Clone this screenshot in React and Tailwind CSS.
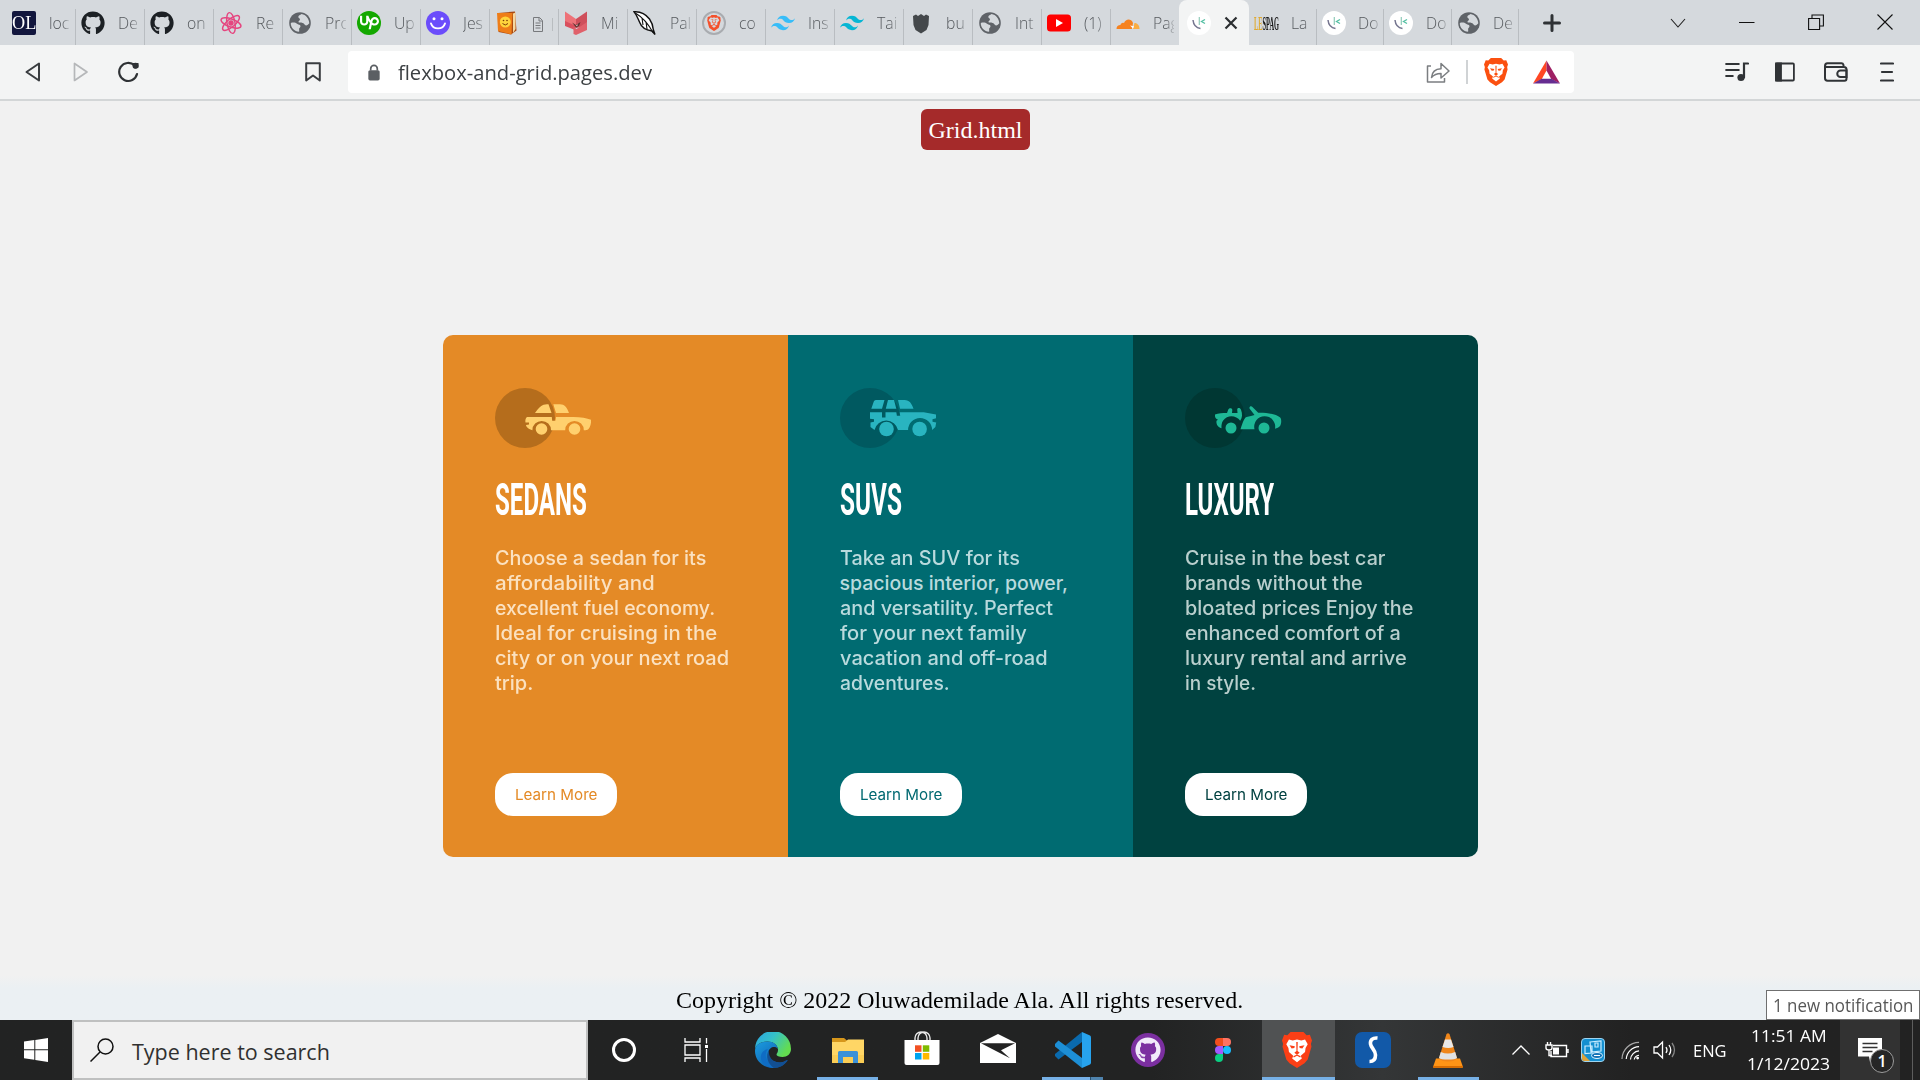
import { useLayoutEffect, useRef, useState } from "react";
import { FaGithub } from "react-icons/fa";
import { SiBrave, SiCloudflare, SiTailwindcss, SiUpwork } from "react-icons/si";

/* One line of text stretched or condensed to an exact width. */
function Fit({ w, children, className = "" }) {
  const ref = useRef(null);
  const [scale, setScale] = useState(1);
  useLayoutEffect(() => {
    if (ref.current) setScale(w / ref.current.offsetWidth);
  }, [w]);
  return (
    <span className={`block whitespace-nowrap ${className}`} style={{ width: w }}>
      <span ref={ref} className="inline-block origin-left whitespace-nowrap" style={{ transform: `scaleX(${scale})` }}>
        {children}
      </span>
    </span>
  );
}

/* ---------- tab icons ---------- */
const Globe = () => (
  <svg viewBox="0 0 24 24" className="size-6">
    <circle cx="12" cy="12" r="10.8" fill="#5f6368" />
    <path d="M2.800 12c2.500-.8 5-.3 6.200.8 1 1 3.200.6 3.500 2.200.1 1.500-1.500 1.800-1.400 3.200.1.900.2 1.600 0 2.600C6.400 20.500 2.600 16.500 2.800 12zM13.500 3c-1.200 1.200-3.300 1.300-3.200 3 .1 1.300 1.800 1.100 1.700 2.500-.1 1.300-1.700 1.400-1.500 2.600.3 1.300 2.800.6 4.300 1 1.600.5 1.600 2.200 3.200 2.300 1.200.1 2.400-.9 3.300-2.200C21 7.500 18 3.800 13.500 3z" fill="#d5d9dd" />
  </svg>
);
const ReactPink = () => (
  <svg viewBox="0 0 24 24" className="size-6" fill="none" stroke="#e5457f" strokeWidth="1.400">
    <ellipse cx="12" cy="12" rx="10.500" ry="4" transform="rotate(20 12 12)" />
    <ellipse cx="12" cy="12" rx="10.500" ry="4" transform="rotate(80 12 12)" />
    <ellipse cx="12" cy="12" rx="10.500" ry="4" transform="rotate(140 12 12)" />
    <circle cx="12" cy="12" r="2" fill="#e5457f" />
  </svg>
);
const Smile = () => (
  <svg viewBox="0 0 24 24" className="size-6">
    <circle cx="12" cy="12" r="12" fill="#6b4dfb" />
    <circle cx="8" cy="7.800" r="1.500" fill="#fff" />
    <circle cx="16" cy="7.800" r="1.500" fill="#fff" />
    <path d="M5 12.500c2 6.500 12 6.500 14 0" fill="none" stroke="#fff" strokeWidth="1.900" strokeLinecap="round" />
  </svg>
);
const Book = () => (
  <svg viewBox="0 0 24 24" className="size-6">
    <path d="M3 2l17-1.500 1.500 19L16 23.500 3.500 21z" fill="#a94a14" />
    <path d="M2 2h15.500l-1 21.500L3 20z" fill="#ee7d18" />
    <path d="M18 2.500l2.500-1V18L18 22z" fill="#f6d9a0" />
    <circle cx="10.300" cy="11" r="5.500" fill="#ffd43c" />
    <circle cx="8.500" cy="9.500" r=".8" fill="#7c3d08" />
    <circle cx="12" cy="9.500" r=".8" fill="#7c3d08" />
    <path d="M7.500 12.500q2.800 3 5.500 0" fill="none" stroke="#7c3d08" />
  </svg>
);
const Fox = () => (
  <svg viewBox="0 0 24 24" className="size-6">
    <path d="M1 .500l11 7.500v9L1 13z" fill="#ee7278" />
    <path d="M23 .500L12 8v9l11-2z" fill="#cf4f5b" />
    <path d="M1 10l11 5-1 4-10-4z" fill="#d9505e" />
    <path d="M9.500 16l3 2L23 11v8l-11 5-2.500-1z" fill="#e0616b" />
    <path d="M8 11.500l4 2.500 4.500-3-1.500 4-3 1.500z" fill="#5f3434" />
    <path d="M10.500 13.500l1.500 1 2-1.200-1 2z" fill="#f5e9dd" />
  </svg>
);
const Feather = () => (
  <svg viewBox="0 0 24 24" className="size-6">
    <path d="M1 .800c6-.5 11.500 2 15.500 7.200 2.500 3.500 3.500 7 3.800 10.500l1.700 5-3-3.500C13 19 8.500 16.500 7 12 5 8 4 4 1 .800z" fill="#fff" stroke="#111" strokeWidth="1.400" />
    <path d="M3 2.500c7 4 12 10 17 19M9 7l1 7M13 11l1 7" fill="none" stroke="#111" strokeWidth="1.100" />
  </svg>
);
const BraveRing = () => (
  <span className="flex size-6 items-center justify-center rounded-full border-2 border-[#a9acb0]">
    <SiBrave className="size-4 text-[#f4512c]" />
  </span>
);
const Badge = () => (
  <svg viewBox="0 0 24 24" className="size-6">
    <path d="M4 5l3-1.500L9 5l3-2 3 2 2-1.500L20 5l-.5 9-2 5-5.500 3.500L6.500 19l-2-5z" fill="#44484b" />
  </svg>
);
const Youtube = () => (
  <svg viewBox="0 0 24 24" className="size-6">
    <rect y="3.500" width="24" height="17" rx="3.500" fill="#f00" />
    <path d="M9 8l7 4-7 4z" fill="#fff" />
  </svg>
);
const Doc = () => (
  <svg viewBox="0 0 24 24" className="size-6">
    <circle cx="12" cy="12" r="12" fill="#fff" />
    <path d="M6 9c.5 5 3.500 8 7.500 8.500" fill="none" stroke="#75758f" strokeWidth="1.500" />
    <path d="M12.300 6v8" stroke="#8fcbb8" strokeWidth="1.200" />
    <path d="M18 8.500l-3.500 2 3.500 2" fill="none" stroke="#53bfa3" strokeWidth="1.300" />
  </svg>
);
const Lespag = () => (
  <span className="-mr-1 flex h-6 w-7 items-end font-['Liberation_Serif'] text-[18px] leading-[22px] font-bold">
    <Fit w={25}>
      <span className="text-[#e0a92e]">LE</span>
      <span className="text-[#181818]">SPAG</span>
    </Fit>
  </span>
);
const OL = () => (
  <span className="flex size-6 items-center justify-center rounded-[2px] bg-[#12163d] font-['Liberation_Serif'] text-[19px] leading-6 text-white">
    <Fit w={24}>OL</Fit>
  </span>
);

const leftTabs = [
  [<OL />, "loc"],
  [<FaGithub className="size-6 text-[#1c2024]" />, "De"],
  [<FaGithub className="size-6 text-[#1c2024]" />, "on"],
  [<ReactPink />, "Re"],
  [<Globe />, "Pro"],
  [
    <span className="flex size-6 items-center justify-center rounded-full bg-[#14a800]">
      <SiUpwork className="size-[19px] text-white" />
    </span>,
    "Up",
  ],
  [<Smile />, "Jes"],
  [<Book />, "page"],
  [<Fox />, "Mi"],
  [<Feather />, "Pal"],
  [<BraveRing />, "co"],
  [<SiTailwindcss className="size-6 text-[#38bdf8]" />, "Ins"],
  [<SiTailwindcss className="size-6 text-[#06b6d4]" />, "Tai"],
  [<Badge />, "bu"],
  [<Globe />, "Int"],
  [<Youtube />, "(1)"],
  [
    <svg viewBox="0 0 24 24" className="size-6">
      <path d="M.500 18c0-2.500 1.500-4 4-4 .2-1.800 2-2.800 3.500-2C9.500 8 15 7 17 12l-1 6z" fill="#f6821f" />
      <path d="M17 18l1.500-6c3 0 5 2.500 5 6z" fill="#fbad41" />
      <path d="M14 14.500l4 .800-1 2.200z" fill="#fff" />
    </svg>,
    "Pag",
  ],
];
const rightTabs = [
  [<Lespag />, "La"],
  [<Doc />, "Do"],
  [<Doc />, "Do"],
  [<Globe />, "De"],
];

function Tab({ icon, label, wide, last }) {
  return (
    <div className={`flex h-9 shrink-0 items-center border-[#b9bdc1] ${wide ? "w-[69px]" : "w-[67.5px]"} ${last ? "" : "border-r"}`}>
      <span className="mb-[9px] ml-[5px] flex w-6 shrink-0">{icon}</span>
      <span className="mb-[9px] ml-[12.500px] flex w-[21px] overflow-hidden font-['Open_Sans'] text-[17px] leading-6 font-light whitespace-nowrap text-[#55595d] [mask-image:linear-gradient(to_right,#000_60%,rgba(0,0,0,.25))]">
        {label === "page" ? (
          <svg viewBox="0 0 24 20" className="mt-0.5 h-5 w-6 shrink-0" fill="none" stroke="#77797c">
            <path d="M1.500 3.500h6l3 3v11h-9zM7 3.500v3.500h3M3.500 9h5M3.500 11.500h5M3.500 14h5" />
            <path d="M20.500 4v13" />
          </svg>
        ) : (
          <span className="inline-block origin-left scale-x-[.93]">{label}</span>
        )}
      </span>
    </div>
  );
}

function TabStrip() {
  return (
    <div className="flex h-[45px] items-end bg-[#d5d9dd] pl-[7px]">
      {leftTabs.map(([icon, label], i) => (
        <Tab key={i} icon={icon} label={label} wide last={i === 16} />
      ))}
      <div className="-ml-px flex h-[45px] w-[70px] shrink-0 items-center rounded-t-lg bg-[#f3f4f4] pl-2">
        <Doc />
        <svg viewBox="0 0 14 14" className="ml-[13px] size-3.5" stroke="#2b2e31" strokeWidth="2.200">
          <path d="M1.500 1.500l11 11M12.500 1.500l-11 11" />
        </svg>
      </div>
      {rightTabs.map(([icon, label], i) => (
        <Tab key={i} icon={icon} label={label} />
      ))}
      <div className="flex h-[45px] flex-1 items-center">
        <svg viewBox="0 0 18 18" className="ml-[24px] size-[18px]" stroke="#2f3235" strokeWidth="3" strokeLinecap="round">
          <path d="M9 1.500v15M1.500 9h15" />
        </svg>
        <svg viewBox="0 0 16 16" className="ml-[109px] size-4" fill="none" stroke="#222" strokeWidth="1.100">
          <path d="M1 4l7 8 7-8" />
        </svg>
        <svg viewBox="0 0 16 16" className="mb-0.5 ml-[53px] size-4" stroke="#111" strokeWidth="1">
          <path d="M0 8.500h15.500" />
        </svg>
        <svg viewBox="0 0 16 16" className="mb-0.5 ml-[53px] size-4" fill="none" stroke="#111" strokeWidth="1.100">
          <path d="M.600 4.500h11v11h-11zM4 4.500V1h11.400v11h-4" />
        </svg>
        <svg viewBox="0 0 16 16" className="mb-0.5 ml-[53px] size-4" stroke="#111" strokeWidth="1.100">
          <path d="M.500 .500l15 15M15.500 .500l-15 15" />
        </svg>
      </div>
    </div>
  );
}

function Toolbar() {
  return (
    <div className="flex h-[56px] items-center border-b-2 border-[#d3d6d7] bg-[#f3f4f4]">
      <svg viewBox="0 0 16 20" className="ml-[25px] h-5 w-4" fill="none" stroke="#3a3d40" strokeWidth="2" strokeLinejoin="round">
        <path d="M14 1.500v17L1.500 10z" />
      </svg>
      <svg viewBox="0 0 16 20" className="ml-8 h-5 w-4" fill="none" stroke="#b5b7b9" strokeWidth="1.700" strokeLinejoin="round">
        <path d="M1.500 1.500v17L14 10z" />
      </svg>
      <svg viewBox="0 0 22 22" className="ml-[29px] size-[22px]" fill="none" stroke="#2f3235" strokeWidth="2.200" strokeLinecap="round">
        <path d="M16.500 4.500A9 9 0 1 0 19 13" />
        <path d="M15 2h5.500v4.500q-5 2.500-5.500-1z" fill="#2f3235" stroke="none" />
        <circle cx="17.500" cy="4.800" r="3" fill="#2f3235" stroke="none" />
      </svg>
      <svg viewBox="0 0 16 20" className="ml-[165px] h-5 w-4" fill="none" stroke="#3a3d40" strokeWidth="2" strokeLinejoin="round">
        <path d="M1.200 1.200h13.600v17.300L8 13.500l-6.800 5z" />
      </svg>
      <div className="ml-[27px] flex h-[42px] w-[1226px] items-center rounded bg-white">
        <svg viewBox="0 0 14 18" className="ml-[19px] h-[17px] w-[14px]" fill="#5b5f63">
          <rect x="1" y="6.500" width="12" height="11" rx="1.800" />
          <path d="M3.500 7V5a3.500 3.500 0 0 1 7 0v2" fill="none" stroke="#5b5f63" strokeWidth="1.800" />
        </svg>
        <div className="mt-px ml-[17px] font-['Open_Sans'] text-[20px] leading-7 text-[#3c4043]">
          <Fit w={254}>flexbox-and-grid.pages.dev</Fit>
        </div>
        <svg viewBox="0 0 24 22" className="ml-[774px] h-[22px] w-6" fill="none" stroke="#7b7e81" strokeWidth="1.500" strokeLinejoin="round">
          <path d="M5 5H1.500v16h17v-4" />
          <path d="M5.500 16.500c.5-5.500 3.500-8.500 9.500-8.700V2.500l8 7.500-8 7v-4.500c-4 0-7 1-9.500 4z" />
        </svg>
        <div className="ml-[16px] h-6 w-[1.500px] bg-[#d0d3d5]" />
        <BraveLion className="ml-[16px] h-7 w-6" face="#fff" shield="#fb5010" />
        <svg viewBox="0 0 28 24" className="ml-[25px] h-6 w-[27px]">
          <path d="M14 0L0 24L9 19.500l5-9z" fill="#ff4724" />
          <path d="M14 0l14 24-9-4.500-5-9z" fill="#9e1f63" />
          <path d="M0 24h28l-9-5H9z" fill="#662d91" />
        </svg>
      </div>
      <svg viewBox="0 0 24 20" className="ml-[151px] h-5 w-6" fill="none" stroke="#303336" strokeWidth="2.200" strokeLinecap="round">
        <path d="M1.200 2h12.500M1.200 8h12.500M1.200 14h6.500M23 1.500h-4v14" />
        <circle cx="16" cy="15.500" r="3.600" fill="#303336" stroke="none" />
      </svg>
      <svg viewBox="0 0 20 20" className="ml-[26px] h-5 w-5" fill="none" stroke="#303336" strokeWidth="1.800">
        <rect x=".9" y="1.500" width="18" height="17" rx="1" />
        <path d="M1 1.500h5v17H1z" fill="#303336" />
      </svg>
      <svg viewBox="0 0 24 20" className="ml-[29px] h-5 w-6" fill="none" stroke="#303336" strokeWidth="2">
        <path d="M19.500 5V3q-.5-1.700-2-1.700H3.500Q1 1.500 1 4v12q0 2.800 2.500 2.800h17q2 0 2-2.300V7.500Q22.500 5 20 5H3.500Q1 5 1 3.500" />
        <path d="M22.500 8.500h-6a3 3 0 0 0 0 6.500h6z" />
      </svg>
      <svg viewBox="0 0 14 20" className="ml-[32px] h-5 w-3.5" fill="none" stroke="#303336" strokeWidth="2.200" strokeLinecap="round">
        <path d="M1 1.500h12M2 10h10M1 18.500h12" />
      </svg>
    </div>
  );
}

function BraveLion({ className, face, shield }) {
  return (
    <svg viewBox="0 0 28 34" className={className} preserveAspectRatio="none">
      <path d="M8 0h12l3 3 3-.4L28 8l-1 3 .5 3-3.500 12-3 3.500L14 34l-7-4.500L4 26 .5 14 1 11 0 8l2-5.400L5 3z" fill={shield} />
      <path d="M6.500 7l3.500 1L14 7l4 1 3.500-1 2.500 4.500-2 3.500-.5 4-4 3.500 1 2.500L14 28.500 9.500 25l1-2.500-4-3.500L6 15l-2-3.500z" fill={face} />
      <path d="M7 12.500l5 1-.5 1.700-2.500.3zM21 12.500l-5 1 .5 1.700 2.500.3zM13.300 9.500h1.400l-.2 8.500 2 1.500-2.500 2-2.500-2 2-1.500zM10.500 23l3.500-1.700 3.500 1.700-.5 1-3-1.500-3 1.500z" fill={shield} />
    </svg>
  );
}

/* ---------- page ---------- */
const Sedan = () => (
  <svg viewBox="0 0 97 60" className="h-[60px] w-[97px]" fill="#ffd06e">
    <circle cx="30" cy="30" r="30" fill="#b56d1c" />
    <path d="M40 25C44 19 47 16.200 52 16.200h1.500L56.500 25zM58.300 16.200H65c4.500 0 7 3 9 8.800H61z" />
    <path d="M32 29h24.800l.4 3.800h3.200L61 29h17c8 .2 14 1.200 18 2.800.3 4.200-.7 7-2.500 9.200-1.500 1.300-3 1.200-4.700 1.200a9.300 9.300 0 1 0-18.600 0H56a9.300 9.300 0 1 0-18.600 0C34 41.500 31 39 31 37l3-.5V34.500h-3.500c-.5-2 0-4.500 1.500-5.500z" />
    <circle cx="46.500" cy="41" r="5.800" />
    <circle cx="79.500" cy="41" r="5.800" />
  </svg>
);
const Suv = () => (
  <svg viewBox="0 0 97 60" className="h-[60px] w-[97px]" fill="#29b4c0">
    <circle cx="30" cy="30" r="30" fill="#005960" />
    <path d="M31.300 20.800l2.500-7.300q.5-1.500 2-1.500h8.700l-2.500 8.800zM48 12h6l2.300 8.800H45.800zM58 12h6.500c5 0 7.500 4 9 8.800H60z" />
    <path d="M30 24.300h12v5.200h3.500v-5.200h10.800l.6 3.500h3.300l-.5-3.500h24L96 26.500v3.800l-3.500 1v2.500l3.700.7-.8 4.500-3.300 3a12 12 0 0 0-24 0H58a12 12 0 0 0-23.500 0L30.500 39v-4.500l3.500-.7v-2.500l-4-.5z" />
    <circle cx="46.500" cy="41" r="7.300" />
    <circle cx="79.600" cy="41" r="7.300" />
  </svg>
);
const Luxury = () => (
  <svg viewBox="0 0 97 60" className="h-[60px] w-[97px]" fill="#1eb896">
    <circle cx="30" cy="30" r="30" fill="#003733" />
    <path d="M30 26.500c3-1.200 8-1.500 12-1.500l1.300-3.500c1-2 4-1.800 4 .5l-.3 3h5.500l-.3-3.500c.3-2 3-2 3.800.2 1.500 4 1.500 8-.8 11-4-5.500-12.500-6.500-17.200 0-1.300 2-1.700 4.500-1.500 7.500-4-1-5.500-4.500-5-7.500l1.500-1c-2-.3-3.500-2.700-3-5.200z" />
    <path d="M64.500 20.500c-.5-2.500 2-3 3.200-1.300l5.500 5.500c9-.2 18 1.300 22 4.800 1.700 2 1 7-.2 8.500-1.300 1.700-3 2.300-5 2.700a10.500 10.500 0 1 0-20.500.5H55.500C57.500 35.500 59 30 61.500 29q5-1.200 8-2z" />
    <circle cx="46" cy="40" r="5.500" />
    <circle cx="79" cy="40" r="5.500" />
  </svg>
);

const cards = [
  {
    icon: <Sedan />, title: "SEDANS", tw: 92, bg: "bg-[#e48a26]", body: "text-[#fbe1c0]", btn: "text-[#e48a26]",
    lines: [["Choose a sedan for its", 211], ["affordability and", 160], ["excellent fuel economy.", 220], ["Ideal for cruising in the", 222], ["city or on your next road", 234], ["trip.", 38]],
  },
  {
    icon: <Suv />, title: "SUVS", tw: 62, bg: "bg-[#006b71]", body: "text-[#b9dadd]", btn: "text-[#006971]",
    lines: [["Take an SUV for its", 180], ["spacious interior, power,", 229], ["and versatility. Perfect", 213], ["for your next family", 187], ["vacation and off-road", 208], ["adventures.", 110]],
  },
  {
    icon: <Luxury />, title: "LUXURY", tw: 89, bg: "bg-[#004240]", body: "text-[#b9cfcd]", btn: "text-[#004140]",
    lines: [["Cruise in the best car", 200], ["brands without the", 178], ["bloated prices Enjoy the", 228], ["enhanced comfort of a", 216], ["luxury rental and arrive", 222], ["in style.", 71]],
  },
];

function Card({ c }) {
  return (
    <article className={`flex w-[345px] flex-col items-start pt-[53px] pl-[52px] ${c.bg}`}>
      {c.icon}
      <h2 className="mt-[27px] h-[50px] font-['Roboto'] text-[44px] leading-[50px] font-bold text-white">
        <Fit w={c.tw}>{c.title}</Fit>
      </h2>
      <p className={`mt-[21px] font-['Inter'] text-[19.500px] leading-[25px] font-[450] ${c.body}`}>
        {c.lines.map(([t, w]) => (
          <Fit key={t} w={w}>{t}</Fit>
        ))}
      </p>
      <button className={`mt-[77px] flex h-[43px] w-[122px] items-center justify-center rounded-[18px] bg-white pt-0.5 font-['Inter'] text-[15px] ${c.btn}`}>
        <Fit w={82}>Learn More</Fit>
      </button>
    </article>
  );
}

function Page() {
  return (
    <main className="flex h-[919px] flex-col items-center bg-[#f1f1f1]">
      <a className="mt-2 ml-[31px] flex h-[41px] w-[109px] shrink-0 items-center justify-center rounded-md bg-[#a52a2a] font-['Liberation_Serif'] text-2xl text-white">
        <Fit w={94}>Grid.html</Fit>
      </a>
      <section className="mt-[185px] flex h-[522px] shrink-0 overflow-hidden rounded-[10px]">
        {cards.map((c) => (
          <Card key={c.title} c={c} />
        ))}
      </section>
      <footer className="mt-auto flex h-[45px] w-full justify-between bg-gradient-to-b from-[#f1f1f1] to-[#ebf0f3] to-30%">
        <div className="ml-[676px] pt-[7px] font-['Liberation_Serif'] text-2xl leading-[36px] text-black">
          <Fit w={567}>Copyright © 2022 Oluwademilade Ala. All rights reserved.</Fit>
        </div>
        <div className="mt-auto flex h-[30px] w-[154px] items-center border border-[#6f6f6f] bg-white pl-[6px] font-['Open_Sans'] text-[17.500px] text-[#575757]">
          <Fit w={140}>1 new notification</Fit>
        </div>
      </footer>
    </main>
  );
}

/* ---------- taskbar ---------- */
const Edge = () => (
  <svg viewBox="0 0 36 36" className="size-9">
    <defs>
      <linearGradient id="edgeTop" x1="0" y1="0" x2="1" y2=".5">
        <stop offset="0" stopColor="#2aa3e2" />
        <stop offset=".5" stopColor="#35c1c9" />
        <stop offset="1" stopColor="#63dc50" />
      </linearGradient>
      <linearGradient id="edgeLow" x1="0" y1="0" x2="1" y2="1">
        <stop offset="0" stopColor="#1b9de0" />
        <stop offset="1" stopColor="#0c4ea3" />
      </linearGradient>
    </defs>
    <path d="M0 17A18 18 0 0 1 36 17c0 5-4 8-8.500 8-3.500 0-6-1-6-2.500 0-1 1.700-1.500 1.500-5-.5-5-5-8-10.500-8C6 9.500 1.500 12 0 17z" fill="url(#edgeTop)" />
    <path d="M0 19C0 13 6 9.500 12.500 9.500c6 0 10 3.500 10.400 7.500-2.500-3.500-9-2-9.500 3.500-.5 6 5 10 11 10 4 0 6-2 8-2.500C30 33 24 36 18 36 8 36 0 28.500 0 19z" fill="url(#edgeLow)" />
    <path d="M13 17c-4 5-3 13 6 19C9 35 5 29 6 24c.5-4 3-6 7-7z" fill="#0f6cc4" />
    <path d="M14 18c-1 7 4 12.500 11 12.500 4 0 6-2 8-2.500-3 5-8.500 8-14 8-6-4-9-12-5-18z" fill="#124f93" />
  </svg>
);
const Explorer = () => (
  <svg viewBox="0 0 32 27" className="h-[27px] w-8">
    <path d="M0 1h12l3 2.500V7H0z" fill="#d7971b" />
    <path d="M0 5h13l3-2.500h16V26H0z" fill="#ffd665" />
    <path d="M0 18h32v8H0z" fill="#f5c445" opacity=".5" />
    <path d="M6 26V15.500q0-1.500 1.500-1.500h17q1.500 0 1.500 1.500V26h-5v-6H11v6z" fill="#3a91d8" />
  </svg>
);
const Store = () => (
  <svg viewBox="0 0 36 34" className="h-[34px] w-9">
    <path d="M11 9V7a6 6 0 0 1 12 0v2M14 9V7a6 6 0 0 1 12 0v2" fill="none" stroke="#e7e7e7" strokeWidth="1.400" />
    <path d="M.500 9h35v23q0 2-2 2h-31q-2 0-2-2z" fill="#fff" />
    <path d="M11 14.300h6.500v6.500H11z" fill="#f25022" />
    <path d="M18.800 14.300h6.500v6.500h-6.500z" fill="#7fba00" />
    <path d="M11 22h6.500v6.500H11z" fill="#00a4ef" />
    <path d="M18.800 22h6.500v6.500h-6.500z" fill="#ffb900" />
  </svg>
);
const Mail = () => (
  <svg viewBox="0 0 36 29" className="h-[29px] w-9">
    <path d="M0 9L18 0l18 9v20H0z" fill="#fff" />
    <path d="M1 9.300h34L21 16.300l9 8z" fill="#232323" />
  </svg>
);
const Code = () => (
  <svg viewBox="0 0 36 36" className="size-9">
    <path d="M0 24l3.500 3.500L27 10V0L0 22z" fill="#0a6aad" />
    <path d="M0 12l3.500-3.500L27 26v10L0 14.500z" fill="#1d8fd6" />
    <path d="M27 0l8 3.500q1 .5 1 2v25q0 1.500-1 2L27 36z" fill="#27a3ee" />
  </svg>
);
const GithubDesktop = () => (
  <span className="flex size-[34px] items-center justify-center rounded-full bg-[#7b2fa0]">
    <FaGithub className="size-[26px] text-[#f1eafa]" />
  </span>
);
const Figma = () => (
  <svg viewBox="0 0 16 24" className="h-6 w-4">
    <path d="M8 0H4a4 4 0 0 0 0 8h4z" fill="#f24e1e" />
    <path d="M8 0h4a4 4 0 0 1 0 8H8z" fill="#ff7262" />
    <path d="M8 8H4a4 4 0 0 0 0 8h4z" fill="#a259ff" />
    <circle cx="12" cy="12" r="4" fill="#1abcfe" />
    <path d="M8 16H4a4 4 0 1 0 4 4z" fill="#0acf83" />
  </svg>
);
const SApp = () => (
  <svg viewBox="0 0 36 36" className="size-9">
    <rect width="36" height="36" rx="7" fill="#1259a8" />
    <path d="M22.500 6c-5-.5-7.500 2-7 6 .5 4 5 6 5 11 0 4-2 6.500-6 6.500" fill="none" stroke="#fff" strokeWidth="3.600" />
  </svg>
);
const Vlc = () => (
  <svg viewBox="0 0 30 35" className="h-[35px] w-[30px]">
    <path d="M3 25.500h24L30 34q0 .8-1 .8H1q-1 0-1-.8z" fill="#ff9416" />
    <path d="M0 33h30v1q0 .8-1 .8H1q-1 0-1-.8z" fill="#d96c00" />
    <path d="M13.500 1q1.500-1.500 3 0L24 25q-2 3.500-9 3.500T6 25z" fill="#f0861a" />
    <path d="M12 6.500h6l2.500 7.500q-5 2-11 0z" fill="#e9e9e9" />
    <path d="M7.800 19q7 3 14.400 0L24 25q-2 1.500-9 1.500T6 25z" fill="#e2e2e2" />
  </svg>
);

function TaskItem({ w, line, active, badge, children }) {
  return (
    <div className={`flex h-[60px] shrink-0 flex-col items-center ${w} ${active ? "bg-[#505253]" : ""}`}>
      <div className="flex h-[57px] items-center pt-[3px]">{children}</div>
      {line && (
        <div className={`flex h-[3px] ${active ? "w-full" : "w-[61px]"} justify-end bg-[#76b0e6]`}>
          {badge && <span className="w-[13px] border-l border-[#28506f] bg-[#4f83ad]" />}
        </div>
      )}
    </div>
  );
}

function Taskbar() {
  return (
    <div className="flex h-[60px] shrink-0 bg-gradient-to-r from-[#222323] from-60% via-[#343637] via-72% to-[#222222] to-85%">
      <div className="flex w-[72px] items-center justify-center">
        <svg viewBox="0 0 24 24" className="size-6" fill="#fff">
          <path d="M0 3.500l10.300-1.400v9.200H0zM11.300 2L24 0v11.300H11.300zM0 12.300h10.300v9.400L0 20.300zM11.300 12.300H24V24l-12.700-2z" />
        </svg>
      </div>
      <div className="flex w-[516px] items-center border-2 border-[#bfc0c0] bg-[#f1f1f1]">
        <svg viewBox="0 0 24 24" className="ml-4 size-6" fill="none" stroke="#111" strokeWidth="1.500">
          <circle cx="15.500" cy="8.500" r="7.500" />
          <path d="M10 14L.500 23.500" />
        </svg>
        <div className="ml-[18px] pt-1 font-['Open_Sans'] text-[21.500px] leading-7 text-[#303030]">
          <Fit w={198}>Type here to search</Fit>
        </div>
      </div>
      <TaskItem w="w-[72px]">
        <span className="size-6 rounded-full border-[3px] border-white" />
      </TaskItem>
      <TaskItem w="w-[71px]">
        <svg viewBox="0 0 24 24" className="size-6" fill="none" stroke="#fff" strokeWidth="1.300">
          <path d="M1 0v4h15V0M1 24v-4h15v4M1 7h15v10H1zM22.500 0v5.500M22.500 11v13" />
          <path d="M21 7h3v3h-3z" fill="#fff" stroke="none" />
        </svg>
      </TaskItem>
      <TaskItem w="w-[83px]"><Edge /></TaskItem>
      <TaskItem w="w-[67px]" line><Explorer /></TaskItem>
      <TaskItem w="w-[81px]"><span className="mb-1 block"><Store /></span></TaskItem>
      <TaskItem w="w-[71px]"><span className="mb-1 block"><Mail /></span></TaskItem>
      <TaskItem w="w-[79px]" line badge><Code /></TaskItem>
      <TaskItem w="w-[71px]"><GithubDesktop /></TaskItem>
      <TaskItem w="w-[79px]"><Figma /></TaskItem>
      <TaskItem w="w-[73px]" line active>
        <span className="mr-1 block"><BraveLion className="h-9 w-[30px]" face="#fff" shield="#fb3f16" /></span>
      </TaskItem>
      <TaskItem w="w-[75px]"><SApp /></TaskItem>
      <TaskItem w="w-[76px]" line><Vlc /></TaskItem>
      <div className="flex flex-1 items-center text-white">
        <svg viewBox="0 0 18 10" className="ml-[26px] h-2.5 w-[18px]" fill="none" stroke="#fff" strokeWidth="1.300">
          <path d="M.500 9.500L9 1l8.500 8.500" />
        </svg>
        <svg viewBox="0 0 24 18" className="ml-[15px] h-[18px] w-6" fill="none" stroke="#fff" strokeWidth="1.400">
          <path d="M2.500 1v3M5.500 1v3M1 4h6v3q0 2-3 2t-3-2zM4 9v5.500h3M8 4.500h13.500v11H6V10M23 8v4" />
          <path d="M8 6.500h6v7H8z" fill="#fff" stroke="none" />
        </svg>
        <svg viewBox="0 0 24 24" className="ml-3 size-6">
          <rect x=".5" y=".5" width="23" height="23" rx="3.500" fill="#148fd0" stroke="#9ed4f0" />
          <path d="M1 15l8 8H3q-2 0-2-2z" fill="#dca33c" />
          <path d="M9 4l11-1v10l-10 1zM4 8h7v7l-7 .5zM14 5v4h3V5z" fill="none" stroke="#c8ecff" strokeWidth="1.200" />
          <ellipse cx="16" cy="17.500" rx="5.500" ry="3" fill="#1374b8" stroke="#e2f5ff" />
          <path d="M13 17.500h6" stroke="#fff" />
        </svg>
        <svg viewBox="0 0 20 20" className="ml-4 size-[19px]" fill="none" stroke="#fff" strokeWidth="1.300">
          <path d="M1 19A18 18 0 0 1 19 1.500" opacity=".6" />
          <path d="M5.500 19A14 14 0 0 1 19 6M10 19.500A9.500 9.500 0 0 1 19 10.500M14 19.500q.5-4 5-4.500" />
          <circle cx="17.500" cy="18" r="1.500" fill="#fff" stroke="none" />
        </svg>
        <svg viewBox="0 0 24 20" className="ml-[13px] h-5 w-6" fill="none" stroke="#fff" strokeWidth="1.300">
          <path d="M1 7h3.500l5-5v16l-5-5H1zM13 7q2 3 0 6M16 5q3.500 5 0 10" />
          <path d="M19 3q5 7 0 14" opacity=".45" />
        </svg>
        <div className="mt-0.5 ml-4 font-['Open_Sans'] text-base">
          <Fit w={34}>ENG</Fit>
        </div>
        <div className="ml-[20px] flex flex-col items-center font-['Open_Sans'] text-[16.500px] leading-[28px]">
          <Fit w={76}>11:51 AM</Fit>
          <Fit w={83}>1/12/2023</Fit>
        </div>
        <div className="relative ml-[10px] flex h-[60px] w-[60px] items-center justify-center bg-[#323232]">
          <svg viewBox="0 0 24 24" className="size-6" fill="#fff">
            <path d="M0 0h24v18.500h-6.500L12 24l-1-5.500H0z" />
            <path d="M4.500 5.500h15M4.500 9.500h15M4.500 13.500h10" stroke="#323232" strokeWidth="1.300" />
          </svg>
          <span className="absolute top-[29px] left-[30px] flex size-6 items-center justify-center rounded-full border border-[#9c9c9c] bg-[#262626] font-['Open_Sans'] text-[16px] font-semibold">
            1
          </span>
        </div>
        <div className="ml-3 h-full w-px bg-[#5d5d5d]" />
      </div>
    </div>
  );
}

export default function App() {
  return (
    <div className="flex h-[1080px] w-[1920px] flex-col overflow-hidden">
      <TabStrip />
      <Toolbar />
      <Page />
      <Taskbar />
    </div>
  );
}
